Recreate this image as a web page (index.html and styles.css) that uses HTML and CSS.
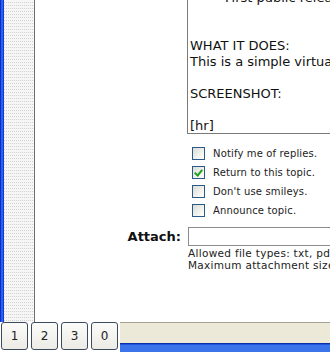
FILE: index.html
```html
<!DOCTYPE html>
<html>
<head>
  <title>Post Reply</title>
  <link rel="stylesheet" href="styles.css">
</head>
<body>
  <div class="window">
    <div class="sidebar"></div>
    <div class="main">
      <div class="editor">
        <div class="editor-text">
          <div class="indent">First public release</div>
          <div class="blank"></div>
          <div class="blank"></div>
          <div>WHAT IT DOES:</div>
          <div>This is a simple virtual keyboard</div>
          <div class="blank"></div>
          <div>SCREENSHOT:</div>
          <div class="blank"></div>
          <div>[hr]</div>
        </div>
      </div>

      <ul class="options">
        <li><span class="check"></span>Notify me of replies.</li>
        <li><span class="check checked"></span>Return to this topic.</li>
        <li><span class="check"></span>Don't use smileys.</li>
        <li><span class="check"></span>Announce topic.</li>
      </ul>

      <div class="attach-row">
        <label class="attach-label">Attach:</label>
        <div class="file-box"></div>
      </div>
      <div class="hint">
        Allowed file types: txt, pdf, jpg, gif, png<br>
        Maximum attachment size allowed: 128 KB
      </div>
    </div>
  </div>

  <div class="bottom-bar">
    <div class="pager">
      <button class="page-btn">1</button>
      <button class="page-btn">2</button>
      <button class="page-btn">3</button>
      <button class="page-btn">0</button>
    </div>
    <div class="status"></div>
  </div>
</body>
</html>
```

FILE: styles.css
```css
body {
  margin: 0;
  padding: 0;
  width: 330px;
  height: 352px;
  overflow: hidden;
  background-color: #fff;
  font-family: "DejaVu Sans", Verdana, sans-serif;
}

.window {
  display: flex;
  height: 322px;
}

.sidebar {
  width: 34px;
  flex-shrink: 0;
  border-right: 1px solid #6e6e6e;
  background:
    linear-gradient(90deg, #0a2fc4 0 1px, #2a60ee 1px 3px, #0d3cd2 3px 4px, transparent 4px),
    linear-gradient(#f6f6f6 0 2px, transparent 2px) 0 0 / 100% 3px,
    repeating-linear-gradient(90deg, #d2d2d2 0 1px, #f6f6f6 1px 2px);
}

.main {
  flex: 1;
  min-width: 0;
  overflow: hidden;
}

.editor {
  margin-left: 152px;
  width: 300px;
  height: 133px;
  border-left: 1px solid #7a7a7a;
  border-bottom: 1px solid #7a7a7a;
  overflow: hidden;
}

.editor-text {
  margin-top: -10px;
  padding-left: 2px;
  font-size: 13px;
  line-height: 16px;
  color: #111;
  white-space: nowrap;
}

.editor-text .indent {
  padding-left: 35px;
}

.editor-text .blank {
  height: 16px;
}

.options {
  list-style: none;
  margin: 10px 0 0 157px;
  padding: 0;
}

.options li {
  display: flex;
  align-items: center;
  height: 19px;
  font-size: 10px;
  letter-spacing: 0.15px;
  color: #222;
  white-space: nowrap;
}

.check {
  width: 11px;
  height: 11px;
  flex-shrink: 0;
  margin-right: 8px;
  border: 1px solid #2a5a8a;
  background: linear-gradient(135deg, #dcdcd6, #f6f6f2 70%, #fff);
  position: relative;
}

.check.checked::after {
  content: "";
  position: absolute;
  left: 3px;
  top: 1px;
  width: 3px;
  height: 6px;
  border-right: 2px solid #21a121;
  border-bottom: 2px solid #21a121;
  transform: rotate(40deg);
}

.attach-row {
  display: flex;
  align-items: center;
  margin-top: 7px;
  height: 19px;
}

.attach-label {
  width: 146px;
  flex-shrink: 0;
  padding-right: 7px;
  text-align: right;
  font-size: 13px;
  font-weight: bold;
  color: #111;
}

.file-box {
  width: 200px;
  height: 17px;
  flex-shrink: 0;
  border: 1px solid #8c8c8c;
  background-color: #fff;
}

.hint {
  margin: 1px 0 0 153px;
  font-size: 10.5px;
  letter-spacing: 0.3px;
  line-height: 12px;
  color: #222;
  white-space: nowrap;
}

.bottom-bar {
  display: flex;
  height: 30px;
}

.pager {
  display: flex;
  gap: 3px;
  width: 119px;
  padding-left: 1px;
  background-color: #fff;
}

.page-btn {
  width: 27px;
  height: 28px;
  padding: 0;
  border: 1px solid #3d4a5e;
  border-radius: 3px;
  background: linear-gradient(#fbfbf9, #ecebe5);
  font-family: "DejaVu Sans", Tahoma, sans-serif;
  font-size: 12px;
  color: #222;
}

.status {
  flex: 1;
  border-top: 1px solid #a5a395;
  background:
    linear-gradient(#ece9d8 0 20px, #0b2fa6 20px 21px, #1f55dc 21px 22px, #3a73ea 22px);
}
```
